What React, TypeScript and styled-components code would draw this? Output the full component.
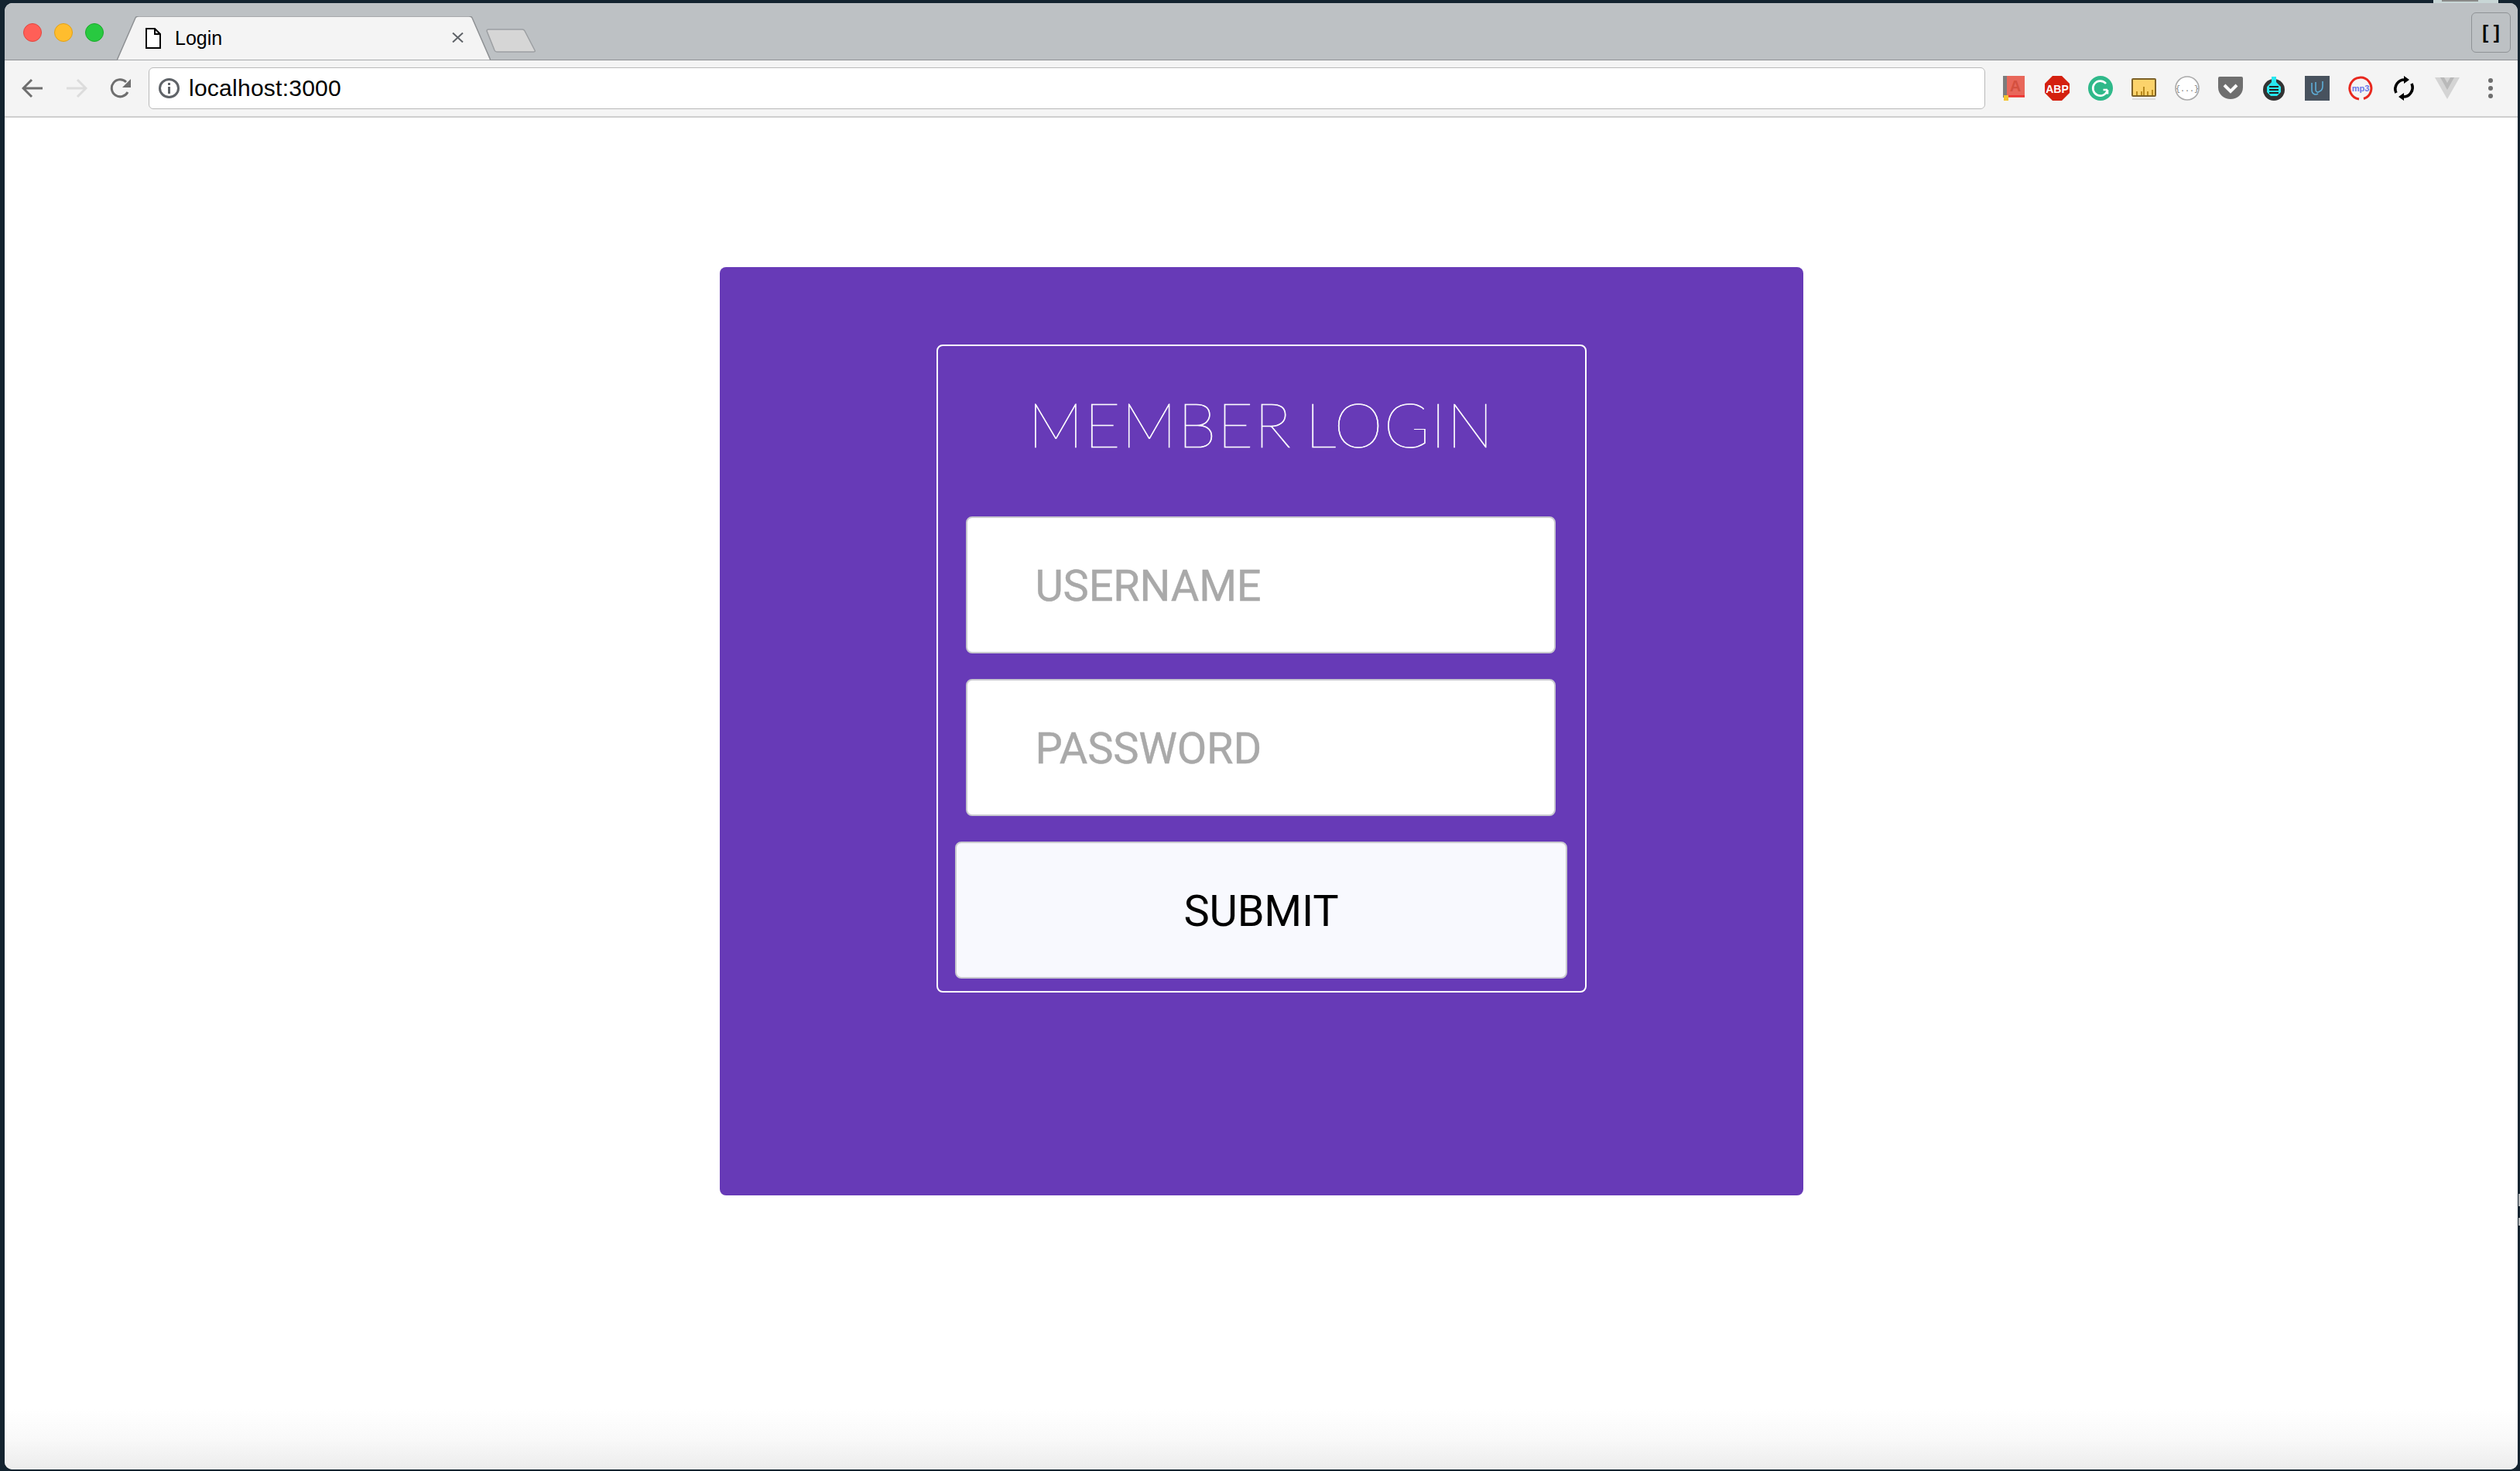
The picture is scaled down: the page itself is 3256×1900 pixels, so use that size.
import React from "react";
import styled, { createGlobalStyle } from "styled-components";

const GlobalStyle = createGlobalStyle`
  html, body {
    margin: 0;
    padding: 0;
    background: #13232f;
  }
  * {
    box-sizing: border-box;
  }
`;

const Desktop = styled.div`
  position: relative;
  width: 3256px;
  height: 1900px;
  padding: 4px 3px 2px 6px;
  overflow: hidden;
`;

// bits of other windows showing round the edge of the browser
const BehindWindow = styled.div<{ $left: number; $top: number; $w: number; $h: number; $bg: string }>`
  position: absolute;
  left: ${(p) => p.$left}px;
  top: ${(p) => p.$top}px;
  width: ${(p) => p.$w}px;
  height: ${(p) => p.$h}px;
  background: ${(p) => p.$bg};
`;

const Browser = styled.div`
  position: relative;
  height: 100%;
  display: flex;
  flex-direction: column;
  border-radius: 10px;
  overflow: hidden;
  background: #fff;
`;

const TitleBar = styled.div`
  height: 74px;
  flex: none;
  display: flex;
  align-items: flex-start;
  background: #bdc1c4;
  border-bottom: 1px solid #8e9194;
`;

const Lights = styled.div`
  display: flex;
  gap: 16px;
  padding: 26px 0 0 24px;
`;

const Light = styled.span<{ $fill: string; $edge: string }>`
  width: 24px;
  height: 24px;
  border-radius: 50%;
  background: ${(p) => p.$fill};
  border: 1px solid ${(p) => p.$edge};
`;

const Tab = styled.div`
  position: relative;
  width: 483px;
  height: 57px;
  margin: 17px 0 0 17px;
  display: flex;
  align-items: center;
  padding-left: 37px;
  color: #000;
  font: 25px "Liberation Sans", Arial, sans-serif;
`;

const TabShape = styled.svg`
  position: absolute;
  left: 0;
  top: 0;
`;

const TabIcon = styled.svg`
  position: relative;
  width: 20px;
  height: 27px;
  margin-right: 18px;
`;

const TabTitle = styled.span`
  position: relative;
  flex: 1;
  margin-top: -1px;
`;

const TabClose = styled.svg`
  position: relative;
  width: 15px;
  height: 13px;
  margin-right: 35px;
  margin-top: -2px;
`;

const NewTab = styled.svg`
  width: 64px;
  height: 31px;
  margin: 33px 0 0 -6px;
`;

const Spacer = styled.div`
  flex: 1;
`;

const ProfileButton = styled.div`
  width: 51px;
  height: 52px;
  margin: 12px 9px 0 0;
  display: flex;
  align-items: center;
  justify-content: center;
  border: 1px solid #8f9396;
  border-radius: 6px;
  color: #000;
  font: 700 24px "Liberation Sans", sans-serif;
`;

const ToolBar = styled.div`
  height: 74px;
  flex: none;
  display: flex;
  align-items: center;
  padding-left: 22px;
  background: #f4f4f4;
  border-bottom: 2px solid #cfcfcf;
`;

const NavIcon = styled.svg`
  width: 28px;
  height: 26px;
  margin-right: 29px;
  flex: none;
`;

const AddressBar = styled.div`
  width: 2373px;
  height: 54px;
  margin: 0 0 0 -7px;
  display: flex;
  align-items: center;
  padding-left: 12px;
  background: #fff;
  border: 1px solid #b9b9b9;
  border-radius: 6px;
  flex: none;
`;

const InfoIcon = styled.svg`
  width: 27px;
  height: 26px;
  margin-right: 12px;
`;

const Url = styled.span`
  color: #000;
  font: 30px "Liberation Sans", Arial, sans-serif;
  letter-spacing: 0.25px;
`;

const Extensions = styled.div`
  display: flex;
  gap: 24px;
  margin-left: 21px;
`;

const Extension = styled.svg`
  width: 32px;
  height: 32px;
  flex: none;
`;

const Page = styled.div`
  flex: 1;
  display: flex;
  justify-content: center;
  align-items: flex-start;
  padding-top: 193px;
  background: linear-gradient(
    to bottom,
    #fff calc(100% - 78px),
    #f9f9f9 calc(100% - 40px),
    #ececec 100%
  );
`;

const LoginCard = styled.div`
  width: 1400px;
  height: 1199px;
  display: flex;
  justify-content: center;
  align-items: flex-start;
  padding-top: 100px;
  background: #673ab7;
  border-radius: 8px;
`;

const LoginForm = styled.form`
  width: 840px;
  height: 837px;
  display: flex;
  flex-direction: column;
  align-items: center;
  gap: 33px;
  border: 2px solid #fff;
  border-radius: 8px;
`;

const Heading = styled.h1`
  margin: 0;
  height: 187px;
  padding-top: 60px;
  color: #fff;
  font: 100 80px/1 Lato, sans-serif;
  letter-spacing: 1.4px;
  word-spacing: -7px;
  white-space: nowrap;
  -webkit-text-stroke: 0.7px #fff;
`;

const Field = styled.input`
  width: 762px;
  height: 177px;
  margin-right: 2px;
  padding: 2px 0 0 88px;
  background: #fff;
  border: 2px solid #c9c9cf;
  border-radius: 8px;
  color: #a9a9a9;
  font: 56px Roboto, sans-serif;
  letter-spacing: -0.2px;
  -webkit-text-stroke: 0.4px #a9a9a9;
  outline: none;

  &::placeholder {
    color: #a9a9a9;
    opacity: 1;
  }
`;

const SubmitButton = styled.button`
  width: 791px;
  height: 177px;
  padding: 2px 0 0;
  background: #f8f9fe;
  border: 2px solid #c9c9cf;
  border-radius: 8px;
  color: #000;
  font: 56px Roboto, sans-serif;
  letter-spacing: -0.2px;
`;

export default function App() {
  return (
    <Desktop>
      <GlobalStyle />
      <BehindWindow $left={3144} $top={0} $w={84} $h={4} $bg="#c8d6d6" />
      <BehindWindow $left={3155} $top={0} $w={47} $h={2} $bg="#8a8a88" />
      <BehindWindow $left={3254} $top={1542} $w={2} $h={16} $bg="#b5b8ba" />
      <BehindWindow $left={3254} $top={1573} $w={2} $h={10} $bg="#b5b8ba" />
      <Browser>
        <TitleBar>
          <Lights>
            <Light $fill="#ff5f57" $edge="#e2463f" />
            <Light $fill="#ffbd2e" $edge="#e1a116" />
            <Light $fill="#28c940" $edge="#1aab29" />
          </Lights>
          <Tab>
            <TabShape width="483" height="57" viewBox="0 0 483 57">
              <path d="M0 57 L24 2 Q25 0 28 0 L455 0 Q458 0 459 2 L483 57 Z" fill="#f4f4f4" stroke="#8e9194" strokeWidth="1.5" />
            </TabShape>
            <TabIcon viewBox="0 0 20 27">
              <path d="M1 1 H12 L19 8 V26 H1 Z M12 1 V8 H19" fill="#fff" stroke="#000" strokeWidth="2" />
            </TabIcon>
            <TabTitle>Login</TabTitle>
            <TabClose viewBox="0 0 15 13">
              <path d="M1 0.5 L14 12.5 M14 0.5 L1 12.5" stroke="#5f6368" strokeWidth="2" />
            </TabClose>
          </Tab>
          <NewTab viewBox="0 0 64 31">
            <path d="M1 3 Q1 1 3 1 H47 Q49 1 50 3 L63 28 Q64 30 61 30 H14 Q12 30 11 28 Z" fill="#d6d6d6" stroke="#9c9fa2" strokeWidth="1.5" />
          </NewTab>
          <Spacer />
          <ProfileButton>[ ]</ProfileButton>
        </TitleBar>
        <ToolBar>
          <NavIcon viewBox="0 0 28 26">
            <path d="M27 13 H3 M13 2 L2 13 L13 24" fill="none" stroke="#6e6e6e" strokeWidth="3" />
          </NavIcon>
          <NavIcon viewBox="0 0 28 26">
            <path d="M1 13 H25 M15 2 L26 13 L15 24" fill="none" stroke="#dcdcdc" strokeWidth="3" />
          </NavIcon>
          <NavIcon viewBox="0 0 28 26">
            <path d="M23 18 A11 11 0 1 1 21 5" fill="none" stroke="#6e6e6e" strokeWidth="3" />
            <path d="M27 1 V12 H16 Z" fill="#6e6e6e" />
          </NavIcon>
          <AddressBar>
            <InfoIcon viewBox="0 0 27 26">
              <ellipse cx="13.5" cy="13" rx="12" ry="11.5" fill="none" stroke="#5f6368" strokeWidth="3" />
              <path d="M13.5 11 V20 M13.5 6 V9" stroke="#5f6368" strokeWidth="3" />
            </InfoIcon>
            <Url>localhost:3000</Url>
          </AddressBar>
          <Extensions>
            <Extension viewBox="0 0 32 32">
              <rect x="6" y="0" width="24" height="28" fill="#e8675a" />
              <rect x="2" y="0" width="5" height="28" fill="#7c7c7c" />
              <rect x="8" y="25" width="22" height="2" fill="#e33" />
              <rect x="3" y="25" width="6" height="7" fill="#f4c430" />
              <text x="18" y="20" textAnchor="middle" fontFamily="Liberation Sans" fontWeight="700" fontSize="20" fill="#d4503f">A</text>
            </Extension>
            <Extension viewBox="0 0 32 32">
              <polygon points="10,0 22,0 32,10 32,22 22,32 10,32 0,22 0,10" fill="#d4200f" />
              <text x="16" y="21.5" textAnchor="middle" fontFamily="Liberation Sans" fontWeight="700" fontSize="14" fill="#fff">ABP</text>
            </Extension>
            <Extension viewBox="0 0 32 32">
              <circle cx="16" cy="16" r="16" fill="#2fb98a" />
              <path d="M23 10 A9.5 9.5 0 1 0 25 18 M25 18 H19.5 M25 18 V23.5" fill="none" stroke="#fff" strokeWidth="2.6" />
            </Extension>
            <Extension viewBox="0 0 32 32">
              <rect x="1" y="4" width="30" height="22" rx="1" fill="#fcd36b" stroke="#7c6128" strokeWidth="2" />
              <path d="M7 25 V20 M13 25 V20 M16 25 V14 M21 25 V20 M27 25 V18" stroke="#b98a1e" strokeWidth="2" />
              <rect x="1" y="29" width="30" height="2" fill="#dcdcdc" />
            </Extension>
            <Extension viewBox="0 0 32 32">
              <circle cx="16" cy="16" r="15" fill="#fff" stroke="#a9a9a9" strokeWidth="1.6" />
              <text x="16" y="20" textAnchor="middle" fontFamily="Liberation Mono" fontSize="10" fill="#777">{"{...}"}</text>
            </Extension>
            <Extension viewBox="0 0 32 32">
              <path d="M0 3 Q0 1 2 1 H30 Q32 1 32 3 V15 C32 24 24 30 16 30 C8 30 0 24 0 15 Z" fill="#6f6f6f" />
              <path d="M8 12 L16 20 L24 12" fill="none" stroke="#fff" strokeWidth="4" />
            </Extension>
            <Extension viewBox="0 0 32 32">
              <circle cx="16" cy="18" r="14" fill="#333" />
              <path d="M13 1 H19 V8 L25 14 V21 L20 26 H12 L7 21 V14 L13 8 Z" fill="#27e8f0" />
              <path d="M10 14 H22 M10 18 H22 M10 22 H22" stroke="#222" strokeWidth="2" />
            </Extension>
            <Extension viewBox="0 0 32 32">
              <rect width="32" height="32" fill="#48525e" />
              <path d="M9 9 V18 C9 24 14 25 17 23 M14 8 V18 C14 21 17 22 19 20 C22 19 23 16 23 13 V7" fill="none" stroke="#5eaed8" strokeWidth="1.6" />
            </Extension>
            <Extension viewBox="0 0 32 32">
              <path d="M14 30 A14 14 0 1 1 20 29.5" fill="none" stroke="#e8281e" strokeWidth="3" />
              <text x="16" y="20" textAnchor="middle" fontFamily="Liberation Sans" fontWeight="700" fontSize="11" fill="#6a78e8">mp3</text>
            </Extension>
            <Extension viewBox="0 0 32 32">
              <path d="M6 22 A12 12 0 0 1 18 5 M26 10 A12 12 0 0 1 14 27" fill="none" stroke="#000" strokeWidth="3.6" />
              <path d="M16 0 L23 5 L16 10 Z M16 22 L9 27 L16 32 Z" fill="#000" />
            </Extension>
            <Extension viewBox="0 0 32 32">
              <polygon points="0,2 32,2 16,30" fill="#d4d4d4" />
              <polygon points="7,2 25,2 16,18" fill="#b9b9b9" />
              <polygon points="12,2 20,2 16,9" fill="#d4d4d4" />
            </Extension>
            <Extension viewBox="0 0 32 32">
              <circle cx="16" cy="6" r="3" fill="#6e6e6e" />
              <circle cx="16" cy="16" r="3" fill="#6e6e6e" />
              <circle cx="16" cy="26" r="3" fill="#6e6e6e" />
            </Extension>
          </Extensions>
        </ToolBar>
        <Page>
          <LoginCard>
            <LoginForm>
              <Heading>MEMBER LOGIN</Heading>
              <Field type="text" placeholder="USERNAME" />
              <Field type="password" placeholder="PASSWORD" />
              <SubmitButton type="button">SUBMIT</SubmitButton>
            </LoginForm>
          </LoginCard>
        </Page>
      </Browser>
    </Desktop>
  );
}
